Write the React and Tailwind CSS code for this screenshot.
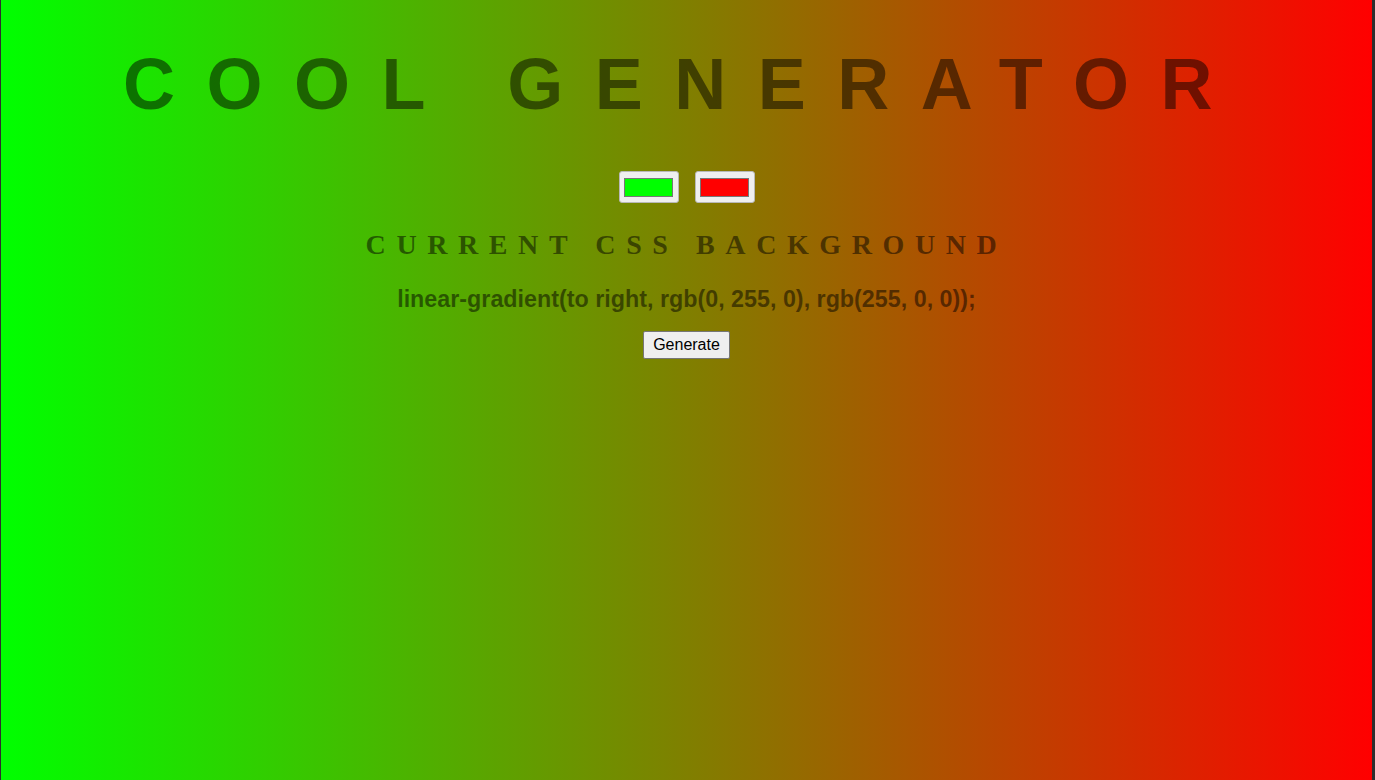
export default function App() {
  return (
    <div className="w-full h-[780px] border-l border-r-[3px] border-[#2e2e2e] bg-[linear-gradient(to_right,rgb(0,255,0),rgb(255,0,0))] flex flex-col items-center overflow-hidden">
      <h1
        className="mt-[48px] text-[72px] leading-[72px] font-bold tracking-[31.5px] text-black/50 whitespace-nowrap pr-[6px]"
        style={{ fontFamily: '"Liberation Sans", Arial, sans-serif' }}
      >
        COOL GENERATOR
      </h1>

      <div className="mt-[51px] flex gap-[16px]">
        <div className="w-[60px] h-[32px] rounded-[3px] bg-[#efefef] border border-[#b8b8b8] flex items-center justify-center">
          <div className="w-[49px] h-[19px] bg-[#00ff00] border border-[#777777]" />
        </div>
        <div className="w-[60px] h-[32px] rounded-[3px] bg-[#efefef] border border-[#b8b8b8] flex items-center justify-center">
          <div className="w-[49px] h-[19px] bg-[#ff0000] border border-[#777777]" />
        </div>
      </div>

      <h3
        className="mt-[28px] text-[28px] leading-[28px] font-bold tracking-[10.6px] text-black/50 whitespace-nowrap"
        style={{ fontFamily: '"Liberation Serif", "Times New Roman", serif' }}
      >
        CURRENT CSS BACKGROUND
      </h3>

      <p
        className="mt-[29px] text-[23.3px] leading-[23px] font-bold text-black/50 whitespace-nowrap"
        style={{ fontFamily: '"Liberation Sans", Arial, sans-serif' }}
      >
        linear-gradient(to right, rgb(0, 255, 0), rgb(255, 0, 0));
      </p>

      <button
        className="mt-[20px] w-[87px] h-[28px] bg-[#efefef] border border-[#767676] rounded-[2px] text-[16px] text-black flex items-center justify-center"
        style={{ fontFamily: '"Liberation Sans", Arial, sans-serif' }}
      >
        Generate
      </button>
    </div>
  );
}
